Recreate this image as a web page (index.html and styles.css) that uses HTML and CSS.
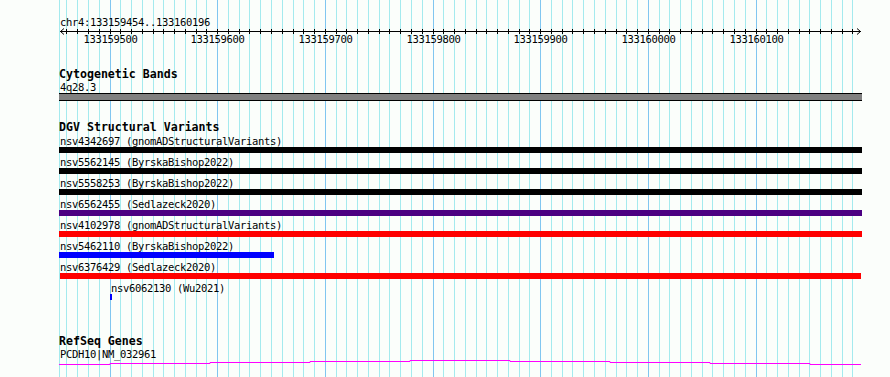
FILE: index.html
```html
<!DOCTYPE html>
<html lang="en">
<head>
  <meta charset="UTF-8">
  <meta name="viewport" content="width=device-width, initial-scale=1.0">
  <title>chr4:133159454..133160196</title>
  <link rel="stylesheet" href="styles.css">
</head>
<body>
  <div class="browser">
    <svg class="grid" id="grid" width="890" height="377"></svg>

    <div class="tracks">
      <div class="ruler">
        <div class="locus">chr4:133159454..133160196</div>
        <svg class="axis" id="axis" width="803" height="20">
          <line x1="1" y1="4.5" x2="802" y2="4.5"></line>
          <polyline points="5,1.5 1.5,4.5 5,7.5"></polyline>
          <polyline points="798,1.5 801.5,4.5 798,7.5"></polyline>
        </svg>
      </div>

      <div class="track cyto">
        <h3>Cytogenetic Bands</h3>
        <div class="label">4q28.3</div>
        <div class="band"></div>
      </div>

      <div class="track dgv">
        <h3>DGV Structural Variants</h3>
        <div class="feature">
          <div class="label">nsv4342697 (gnomADStructuralVariants)</div>
          <div class="bar black" style="width: 803px"></div>
        </div>
        <div class="feature">
          <div class="label">nsv5562145 (ByrskaBishop2022)</div>
          <div class="bar black" style="width: 803px"></div>
        </div>
        <div class="feature">
          <div class="label">nsv5558253 (ByrskaBishop2022)</div>
          <div class="bar black" style="width: 803px"></div>
        </div>
        <div class="feature">
          <div class="label">nsv6562455 (Sedlazeck2020)</div>
          <div class="bar purple" style="width: 803px"></div>
        </div>
        <div class="feature">
          <div class="label">nsv4102978 (gnomADStructuralVariants)</div>
          <div class="bar red" style="width: 803px"></div>
        </div>
        <div class="feature">
          <div class="label">nsv5462110 (ByrskaBishop2022)</div>
          <div class="bar blue" style="width: 215px"></div>
        </div>
        <div class="feature">
          <div class="label">nsv6376429 (Sedlazeck2020)</div>
          <div class="bar red" style="margin-left: 1px; width: 801px"></div>
        </div>
        <div class="feature">
          <div class="label" style="padding-left: 52px">nsv6062130 (Wu2021)</div>
          <div class="bar blue" style="margin-left: 51px; width: 2px"></div>
        </div>
      </div>

      <div class="track refseq">
        <h3>RefSeq Genes</h3>
        <div class="label">PCDH10|NM_032961</div>
        <svg class="gene" width="803" height="8">
          <polyline points="0,5.5 51,5.5 51,4.5 151,4.5 151,3.5 251,3.5 251,2.5 351,2.5 351,1.5 451,1.5 451,2.5 551,2.5 551,3.5 651,3.5 651,4.5 751,4.5 751,5.5 802,5.5"></polyline>
        </svg>
      </div>
    </div>
  </div>

  <script>
    const ns = 'http://www.w3.org/2000/svg';
    const grid = document.getElementById('grid');
    const axis = document.getElementById('axis');
    const left = 59;

    // x of a base on screen, 133159500 sits on pixel 110
    function xOf(bp) {
      return Math.floor(110 + (bp - 133159500) * 1.0767);
    }

    function addLine(svg, x1, y1, x2, y2, cls) {
      let line = document.createElementNS(ns, 'line');
      line.setAttribute('x1', x1);
      line.setAttribute('y1', y1);
      line.setAttribute('x2', x2);
      line.setAttribute('y2', y2);
      if (cls) line.setAttribute('class', cls);
      svg.appendChild(line);
    }

    addLine(grid, left + 0.5, 0, left + 0.5, 377, 'minor');

    for (let bp = 133159460; bp <= 133160190; bp += 10) {
      let x = xOf(bp) + 0.5;
      let major = bp % 100 === 0;
      addLine(grid, x, 0, x, 377, major ? 'major' : 'minor');
      addLine(axis, x - left, 2, x - left, 7);

      if (major) {
        let text = document.createElementNS(ns, 'text');
        text.setAttribute('x', x - left);
        text.setAttribute('y', 16);
        text.textContent = bp;
        axis.appendChild(text);
      }
    }
  </script>
</body>
</html>
```

FILE: styles.css
```css
body {
  margin: 0;
  background: #fbfefb;
  font-family: "DejaVu Sans Mono", monospace;
  color: #000;
}

.browser {
  position: relative;
  width: 890px;
  height: 377px;
  overflow: hidden;
}

.grid {
  position: absolute;
  left: 0;
  top: 0;
}

.grid line {
  stroke-width: 1;
}

.grid .minor {
  stroke: #a4eaee;
}

.grid .major {
  stroke: #80c6f0;
}

.tracks {
  position: relative;
  margin-left: 59px;
  width: 803px;
}

.ruler {
  padding-top: 15px;
}

.locus, .label {
  font-size: 10.5px;
  letter-spacing: -0.32px;
  line-height: 14px;
  height: 12px;
  padding-left: 1px;
  white-space: nowrap;
}

.axis {
  display: block;
}

.axis line, .axis polyline {
  stroke: #000;
  stroke-width: 1;
  fill: none;
}

.axis text {
  font-family: "DejaVu Sans Mono", monospace;
  font-size: 10.5px;
  letter-spacing: -0.32px;
  text-anchor: middle;
  fill: #000;
}

h3 {
  margin: 0;
  font-size: 11.6px;
  line-height: 13px;
  height: 12px;
  font-weight: bold;
}

.cyto {
  margin-top: 21px;
}

.band {
  margin-top: 1px;
  height: 6px;
  background: #808080;
  border-top: 1px solid #000;
  border-bottom: 1px solid #000;
}

.dgv {
  margin-top: 20px;
}

.dgv h3 {
  margin-bottom: 1px;
}

.feature .bar {
  margin-top: 1px;
  margin-bottom: 2px;
  height: 6px;
}

.bar.black {
  background: #000;
}

.bar.purple {
  background: #4b0082;
}

.bar.red {
  background: #ff0000;
}

.bar.blue {
  background: #0000ff;
}

.refseq {
  margin-top: 35px;
}

.gene {
  display: block;
}

.gene polyline {
  fill: none;
  stroke: #ff00ff;
  stroke-width: 1;
}
```
